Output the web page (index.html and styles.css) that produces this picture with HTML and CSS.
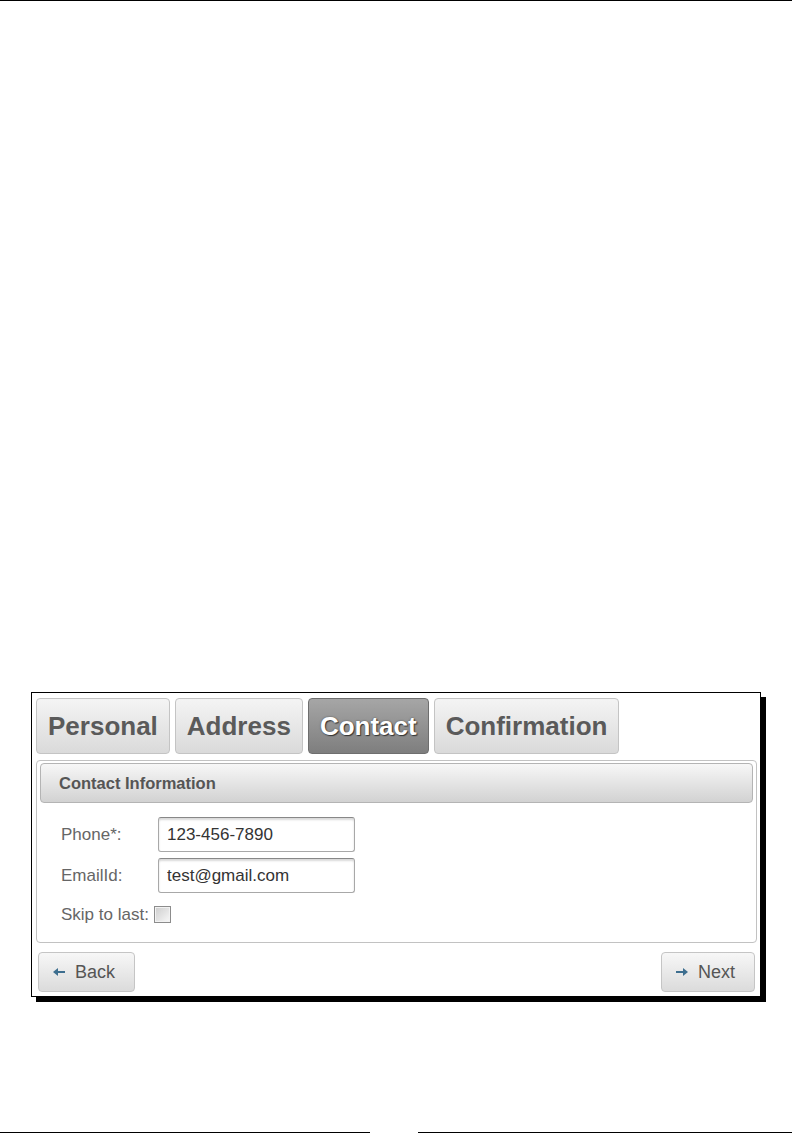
FILE: index.html
```html
<!DOCTYPE html>
<html lang="en">
<head>
    <meta charset="UTF-8">
    <title>Contact Information</title>
    <link rel="stylesheet" href="styles.css">
</head>
<body>
    <div class="page-rule"></div>

    <div class="figure">
        <div class="tabs">
            <div class="tab">Personal</div>
            <div class="tab">Address</div>
            <div class="tab tab-active">Contact</div>
            <div class="tab">Confirmation</div>
        </div>

        <div class="panel">
            <div class="panel-header">Contact Information</div>
            <div class="fields">
                <div class="field">
                    <label for="phone">Phone*:</label>
                    <input type="text" id="phone" value="123-456-7890">
                </div>
                <div class="field">
                    <label for="email">EmailId:</label>
                    <input type="text" id="email" value="test@gmail.com">
                </div>
                <div class="field field-check">
                    <label for="skip">Skip to last:</label>
                    <input type="checkbox" id="skip">
                </div>
            </div>
        </div>

        <div class="actions">
            <button class="btn">
                <svg width="12" height="8" viewBox="0 0 12 8"><polygon points="0,4 5,0 5,3 12,3 12,5 5,5 5,8" fill="#3d6e8f"/></svg>
                Back
            </button>
            <button class="btn">
                <svg width="12" height="8" viewBox="0 0 12 8"><polygon points="12,4 7,0 7,3 0,3 0,5 7,5 7,8" fill="#3d6e8f"/></svg>
                Next
            </button>
        </div>
    </div>

    <div class="page-foot">
        <div class="foot-line foot-left"></div>
        <div class="foot-line foot-right"></div>
    </div>
</body>
</html>
```

FILE: styles.css
```css
body {
    margin: 0;
    font-family: "Liberation Sans", Arial, sans-serif;
    background: #fff;
}
.page-rule {
    height: 1px;
    background: #000;
}
.figure {
    width: 721px;
    margin: 691px 0 0 31px;
    padding: 5px 3px 4px 4px;
    border: 1px solid #000;
    box-shadow: 5px 5px 0 #000;
}
.tabs {
    display: flex;
    gap: 5px;
}
.tab {
    display: flex;
    align-items: center;
    height: 54px;
    padding: 0 11px;
    border: 1px solid #c4c4c4;
    border-radius: 4px;
    background: linear-gradient(#f4f4f4, #dadada);
    color: #5a5a5a;
    font-size: 26px;
    font-weight: bold;
}
.tab-active {
    background: linear-gradient(#a6a6a6, #7e7e7e);
    border-color: #6e6e6e;
    color: #fff;
    text-shadow: 1px 1px 1px #333, 0 0 2px #555;
}
.panel {
    margin-top: 6px;
    padding: 2px 3px 0;
    border: 1px solid #c2c2c2;
    border-radius: 4px;
}
.panel-header {
    display: flex;
    align-items: center;
    height: 38px;
    padding-left: 18px;
    border: 1px solid #b4b4b4;
    border-radius: 4px;
    background: linear-gradient(#f7f7f7, #d2d2d2);
    color: #555;
    font-size: 16.5px;
    font-weight: bold;
}
.fields {
    display: flex;
    flex-direction: column;
    gap: 6px;
    padding: 14px 0 19px 21px;
}
.field {
    display: flex;
    align-items: center;
}
.field label {
    width: 97px;
    color: #666;
    font-size: 17px;
}
.field input[type="text"] {
    box-sizing: border-box;
    width: 197px;
    height: 35px;
    padding: 0 8px;
    border: 1px solid #a8a8a8;
    border-top-color: #888;
    border-radius: 3px;
    box-shadow: inset 0 2px 2px rgba(0,0,0,0.15);
    color: #333;
    font-family: inherit;
    font-size: 17px;
}
.field-check {
    height: 17px;
    margin-top: 7px;
}
.field-check label {
    width: auto;
}
.field input[type="checkbox"] {
    appearance: none;
    width: 17px;
    height: 17px;
    margin: 0 0 0 5px;
    border: 1px solid #8c8c8c;
    background: linear-gradient(135deg, #cdcdcd, #f8f8f8);
    box-shadow: inset 0 0 0 1px #f2f2f2;
}
.actions {
    display: flex;
    justify-content: space-between;
    margin-top: 9px;
    padding: 0 2px;
}
.btn {
    display: flex;
    align-items: center;
    gap: 10px;
    height: 40px;
    padding: 0 19px 0 14px;
    border: 1px solid #c5c5c5;
    border-radius: 4px;
    background: linear-gradient(#f7f7f7, #dbdbdb);
    color: #555;
    font-family: inherit;
    font-size: 18px;
}
.page-foot {
    display: flex;
    margin-top: 135px;
}
.foot-line {
    height: 1px;
    background: #000;
}
.foot-left {
    width: 370px;
}
.foot-right {
    flex: 1;
    margin-left: 48px;
}
```
